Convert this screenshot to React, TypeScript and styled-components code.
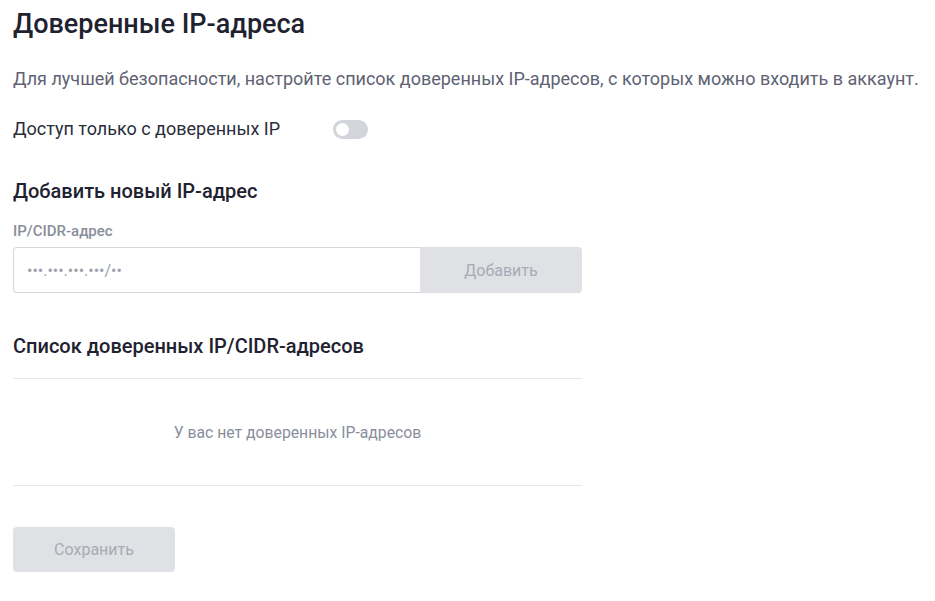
import React, { useState } from 'react';
import styled, { createGlobalStyle } from 'styled-components';

const GlobalStyle = createGlobalStyle`
  html, body {
    margin: 0;
    padding: 0;
    background: #ffffff;
  }
  body {
    font-family: Roboto, "Noto Sans", "Liberation Sans", sans-serif;
    color: #1f2230;
  }
`;

const Page = styled.main`
  display: flex;
  flex-direction: column;
  padding: 7px 13px 29px;
`;

const Title = styled.h1`
  margin: 0;
  font-size: 27px;
  line-height: 34px;
  font-weight: 500;
  color: #1f2230;
`;

const Description = styled.p`
  margin: 26px 0 0;
  font-size: 18px;
  line-height: 24px;
  color: #5e6272;
`;

const ToggleRow = styled.label`
  display: flex;
  align-items: center;
  gap: 53px;
  margin-top: 26px;
  font-size: 18px;
  line-height: 24px;
  color: #2a2d3a;
  cursor: pointer;
`;

const Track = styled.span<{ $on: boolean }>`
  position: relative;
  width: 35px;
  height: 19px;
  border-radius: 10px;
  background: ${p => (p.$on ? '#3d6df2' : '#d3d5dc')};
  transition: background 0.2s ease;
`;

const Knob = styled.span<{ $on: boolean }>`
  position: absolute;
  top: 3px;
  left: ${p => (p.$on ? '19px' : '3px')};
  width: 13px;
  height: 13px;
  border-radius: 50%;
  background: #ffffff;
  transition: left 0.2s ease;
`;

const SectionTitle = styled.h2<{ $top: number }>`
  margin: ${p => p.$top}px 0 0;
  font-size: 20px;
  line-height: 26px;
  font-weight: 500;
  color: #1f2230;
`;

const Form = styled.div`
  width: 569px;
  margin-top: 18px;
`;

const FieldLabel = styled.div`
  font-size: 15px;
  line-height: 18px;
  font-weight: 500;
  color: #8a8e9c;
`;

const InputGroup = styled.div`
  display: flex;
  height: 46px;
  margin-top: 7px;
`;

const Input = styled.input`
  flex: 1;
  min-width: 0;
  box-sizing: border-box;
  border: 1px solid #d5d7de;
  border-right: none;
  border-radius: 4px 0 0 4px;
  padding: 0 13px;
  font-family: inherit;
  font-size: 16px;
  color: #1f2230;
  outline: none;

  &::placeholder {
    color: #9c9fab;
  }
`;

const GreyButton = styled.button<{ $width: number; $joined?: boolean }>`
  width: ${p => p.$width}px;
  border: none;
  border-radius: ${p => (p.$joined ? '0 4px 4px 0' : '4px')};
  background: #e0e1e5;
  color: #a8abb5;
  font-family: inherit;
  font-size: 16px;
  font-weight: 400;
  cursor: not-allowed;
`;

const ListBox = styled.div`
  width: 569px;
  margin-top: 19px;
  border-top: 1px solid #e6e7eb;
  border-bottom: 1px solid #e6e7eb;
  height: 106px;
  display: flex;
  align-items: center;
  justify-content: center;
`;

const EmptyText = styled.span`
  font-size: 15.75px;
  color: #8a8e9c;
`;

const SaveButton = styled(GreyButton)`
  height: 45px;
  margin-top: 41px;
  align-self: flex-start;
`;

export default function App() {
  const [trusted, setTrusted] = useState(false);
  const [ip, setIp] = useState('');

  return (
    <>
      <GlobalStyle />
      <Page>
        <Title>Доверенные IP-адреса</Title>
        <Description>
          Для лучшей безопасности, настройте список доверенных IP-адресов, с которых можно входить в аккаунт.
        </Description>

        <ToggleRow onClick={() => setTrusted(v => !v)}>
          Доступ только с доверенных IP
          <Track $on={trusted}>
            <Knob $on={trusted} />
          </Track>
        </ToggleRow>

        <SectionTitle $top={37}>Добавить новый IP-адрес</SectionTitle>
        <Form>
          <FieldLabel>IP/CIDR-адрес</FieldLabel>
          <InputGroup>
            <Input
              value={ip}
              onChange={e => setIp(e.target.value)}
              placeholder="•••.•••.•••.•••/••"
            />
            <GreyButton $width={162} $joined disabled>
              Добавить
            </GreyButton>
          </InputGroup>
        </Form>

        <SectionTitle $top={40}>Список доверенных IP/CIDR-адресов</SectionTitle>
        <ListBox>
          <EmptyText>У вас нет доверенных IP-адресов</EmptyText>
        </ListBox>

        <SaveButton $width={162} disabled>
          Сохранить
        </SaveButton>
      </Page>
    </>
  );
}
